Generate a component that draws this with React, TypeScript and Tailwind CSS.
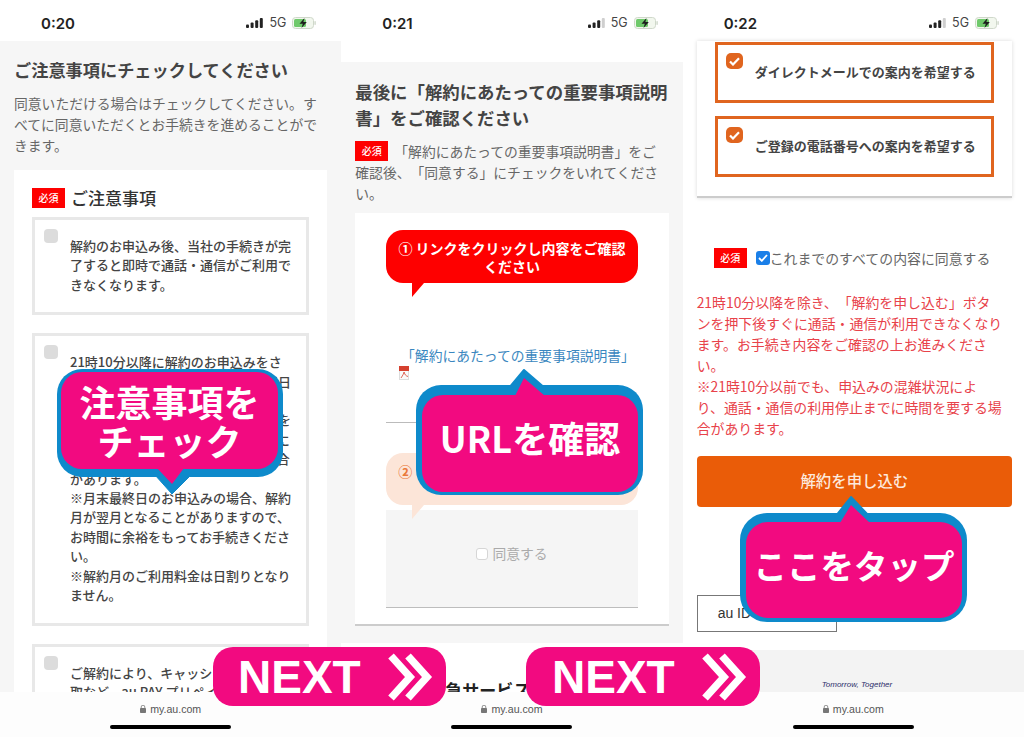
import { ReactNode } from "react";

function StatusBar({ time, full }: { time: string; full?: boolean }) {
  return (
    <div className="flex h-[41px] shrink-0 items-center bg-white pl-[41px] pr-[25px] pt-[5px]">
      <span className="text-[15px] font-semibold leading-none text-[#222] font-['Inter',sans-serif]">{time}</span>
      <div className="ml-auto flex items-center">
        <svg width="18" height="10" viewBox="0 0 18 10" fill="#222">
          <rect x="0" y="6.5" width="3" height="3.5" rx="1" />
          <rect x="4.6" y="4.5" width="3" height="5.5" rx="1" />
          <rect x="9.2" y="2.2" width="3" height="7.8" rx="1" />
          <rect x="13.8" y="0" width="3" height="10" rx="1" fill={full ? "#222" : "#cfcfcf"} />
        </svg>
        <span className="ml-[5px] text-[12.5px] leading-none text-[#444] font-['Inter',sans-serif]">5G</span>
        <svg className="ml-[6px]" width="24" height="12" viewBox="0 0 24 12">
          <rect x="0.5" y="0.5" width="21" height="11" rx="3" fill="#f2f7ee" stroke="#cfd8ca" />
          <rect x="2" y="2" width="12" height="8" rx="1.5" fill="#6fc96b" />
          <path d="M12.5 1 L7.5 6.8 H10.8 L9.5 11 L14.8 5 H11.4 Z" fill="#1d1d1d" />
          <rect x="22.4" y="4" width="1.4" height="4" rx="0.7" fill="#cfd8ca" />
        </svg>
      </div>
    </div>
  );
}

function BrowserBar() {
  return (
    <div className="absolute inset-x-0 bottom-0 flex h-[45px] flex-col items-center bg-[#fdfdfd]">
      <div className="mt-[11px] flex h-[12px] items-center gap-[4px]">
        <svg width="6" height="8" viewBox="0 0 6 8" fill="#777">
          <rect x="0" y="3" width="6" height="5" rx="0.8" />
          <path d="M1.2 3.2V2a1.8 1.8 0 0 1 3.6 0v1.2" fill="none" stroke="#777" strokeWidth="0.8" />
        </svg>
        <span className="text-[10.6px] leading-none text-[#555] font-['Liberation_Sans',sans-serif]">my.au.com</span>
      </div>
      <div className="mt-[10px] h-[4px] w-[121px] rounded-full bg-black" />
    </div>
  );
}

function Badge() {
  return (
    <span className="inline-flex h-[20px] w-[33px] shrink-0 items-center justify-center bg-[#fe0000] align-top text-[10px] font-medium leading-none text-white">
      必須
    </span>
  );
}

function NoticeBox({ lines, children }: { lines: string[]; children?: ReactNode }) {
  return (
    <div className="flex border-[3px] border-[#e8e8e8] bg-white pb-[18px] pl-[9px]">
      <span className="mt-[9px] h-[14px] w-[14px] shrink-0 rounded-[4px] bg-[#dcdcdc]" />
      <p className="ml-[12px] mt-[16px] whitespace-nowrap text-[13px] font-medium leading-[19.4px] text-[#444]">
        {lines.map((l) => (
          <span key={l} className="block">{l}</span>
        ))}
        {children}
      </p>
    </div>
  );
}

function OrangeBox({ label }: { label: string }) {
  return (
    <div className="flex h-[61px] border-[3px] border-[#e0651f] bg-white pl-[8px]">
      <span className="mt-[8px] flex h-[16px] w-[17px] shrink-0 items-center justify-center rounded-[5px] bg-[#e0651f]">
        <svg width="11" height="9" viewBox="0 0 11 9" fill="none" stroke="white" strokeWidth="2.2">
          <path d="M1 4.5 L4 7.5 L10 1.2" />
        </svg>
      </span>
      <span className="ml-[12px] mt-[17px] whitespace-nowrap text-[13px] font-bold leading-[20px] text-[#444]">{label}</span>
    </div>
  );
}

function Next({ className }: { className: string }) {
  return (
    <div className={`absolute top-[647px] flex h-[59px] items-center rounded-[20px] bg-[#f20a80] ${className}`}>
      <span className="text-[46px] font-bold leading-none text-white font-['Liberation_Sans',sans-serif]">NEXT</span>
      <svg className="ml-[27px]" width="46" height="48" viewBox="0 0 46 48" fill="none" stroke="white" strokeWidth="7.5" strokeMiterlimit="10">
        <path d="M3 3 L22 24 L3 45" />
        <path d="M20 3 L39 24 L20 45" />
      </svg>
    </div>
  );
}

export default function App() {
  return (
    <div className="relative grid h-[737px] w-[1024px] grid-cols-3 overflow-hidden bg-white [text-spacing-trim:space-all] font-['Noto_Sans_CJK_JP','Liberation_Sans',sans-serif]">
      {/* 0:20 */}
      <div className="relative flex h-[737px] flex-col overflow-hidden">
        <StatusBar time="0:20" full />
        <div className="flex-1 bg-[#f6f6f6] px-[14px] pt-[16px]">
          <h2 className="text-[17.2px] font-bold leading-[26px] text-[#444]">ご注意事項にチェックしてください</h2>
          <p className="mt-[10px] text-[13.8px] leading-[21px] text-[#666]">
            同意いただける場合はチェックしてください。すべてに同意いただくとお手続きを進めることができます。
          </p>
          <div className="mt-[14px] bg-white px-[18px] pt-[18px]">
            <div className="flex items-center gap-[6px]">
              <Badge />
              <span className="text-[17px] font-medium leading-[20px] text-[#333]">ご注意事項</span>
            </div>
            <div className="mt-[9px] flex flex-col gap-[18px]">
              <NoticeBox lines={["解約のお申込み後、当社の手続きが完", "了すると即時で通話・通信がご利用で", "きなくなります。"]} />
              <NoticeBox
                lines={[
                  "21時10分以降に解約のお申込みをさ",
                  "れた場合、解約のお手続き完了は翌日",
                  "以降となります。",
                  "通話・通信の利用停止までには時間を",
                  "要する場合があります。ご利用状況に",
                  "よっては、さらにお時間を要する場合",
                  "があります。",
                  "※月末最終日のお申込みの場合、解約",
                  "月が翌月となることがありますので、",
                  "お時間に余裕をもってお手続きくださ",
                  "い。",
                  "※解約月のご利用料金は日割りとなり",
                  "ません。",
                ]}
              />
              <NoticeBox lines={["ご解約により、キャッシュバック受", "取など、au PAY プリペイドカード"]} />
            </div>
          </div>
        </div>
        <BrowserBar />
      </div>

      {/* 0:21 */}
      <div className="relative flex h-[737px] flex-col overflow-hidden">
        <StatusBar time="0:21" />
        <div className="mt-[21px] bg-[#f6f6f6] px-[14px] pb-[17px] pt-[17px]">
          <h2 className="text-[17.4px] font-bold leading-[26px] text-[#444]">
            最後に「解約にあたっての重要事項説明書」をご確認ください
          </h2>
          <p className="mt-[10px] text-[13.8px] leading-[21px] text-[#666]">
            <span className="mr-[6px]"><Badge /></span>
            「解約にあたっての重要事項説明書」をご確認後、「同意する」にチェックをいれてください。
          </p>
          <div className="mt-[9px] border-b-2 border-[#cccccc] bg-white px-[31px] pb-[16px] pt-[17px]">
            <div className="relative flex h-[53px] items-center justify-center rounded-[17px] bg-[#fe0000] px-[8px] text-center text-[14px] font-bold leading-[18px] text-white">
              ① リンクをクリックし内容をご確認ください
              <span className="absolute left-[26px] top-full h-0 w-0 border-r-[12px] border-t-[14px] border-r-transparent border-t-[#fe0000]" />
            </div>
            <p className="mt-[62px] whitespace-nowrap pl-[12px] text-center text-[13.8px] leading-[20px] text-[#3a87c0]">
              「解約にあたっての重要事項説明書」
            </p>
            <svg className="ml-[13px] mt-[1px]" width="10" height="14" viewBox="0 0 10 14">
              <rect x="0.5" y="0.5" width="9" height="13" fill="#fafafa" stroke="#ddd" />
              <rect x="0" y="0" width="10" height="5" fill="#d5402f" />
              <path d="M2 12 C4 9 5 7 5 6 C6 9 7 10 9 10.5" fill="none" stroke="#d5402f" strokeWidth="0.8" />
            </svg>
            <div className="mt-[42px] h-px bg-[#bbbbbb]" />
            <div className="relative mt-[30px] flex h-[52px] items-start rounded-[17px] bg-[#fce5d8] pl-[12px] pt-[8px] text-[14px] font-bold leading-[20px] text-[#ea7a3c]">
              ②
              <span className="absolute left-[26px] top-full z-10 h-0 w-0 border-r-[12px] border-t-[14px] border-r-transparent border-t-[#fce5d8]" />
            </div>
            <div className="mt-[5px] flex h-[98px] items-center justify-center gap-[4px] border-b border-[#bdbdbd] bg-[#f5f5f5] pb-[10px]">
              <span className="h-[12px] w-[12px] rounded-[3px] border border-[#d6d6d6] bg-white" />
              <span className="text-[13.8px] leading-none text-[#aaaaaa]">同意する</span>
            </div>
          </div>
        </div>
        <h3 className="ml-[87px] mt-[35px] whitespace-nowrap text-[17px] font-bold leading-[24px] text-[#222]">緊急サービスに関する</h3>
        <BrowserBar />
      </div>

      {/* 0:22 */}
      <div className="relative flex h-[737px] flex-col overflow-hidden">
        <StatusBar time="0:22" />
        <div className="ml-[14px] mr-[12px] flex flex-col gap-[13px] border-b-2 border-[#cccccc] bg-white px-[18px] pb-[19px] pt-px shadow-[0_0_4px_rgba(0,0,0,0.15)]">
          <OrangeBox label="ダイレクトメールでの案内を希望する" />
          <OrangeBox label="ご登録の電話番号への案内を希望する" />
        </div>
        <div className="ml-[31px] mt-[50px] flex items-center">
          <Badge />
          <span className="ml-[9px] flex h-[14px] w-[14px] items-center justify-center rounded-[3px] bg-[#1a7fe8]">
            <svg width="10" height="8" viewBox="0 0 10 8" fill="none" stroke="white" strokeWidth="1.8">
              <path d="M1 4 L3.8 6.8 L9 1" />
            </svg>
          </span>
          <span className="whitespace-nowrap text-[13.9px] leading-[20px] text-[#666]">これまでのすべての内容に同意する</span>
        </div>
        <p className="ml-[14px] mt-[24px] w-[307px] text-[13.9px] leading-[21px] text-[#e8424a]">
          21時10分以降を除き、「解約を申し込む」ボタンを押下後すぐに通話・通信が利用できなくなります。お手続き内容をご確認の上お進みください。
          <br />
          ※21時10分以前でも、申込みの混雑状況により、通話・通信の利用停止までに時間を要する場合があります。
        </p>
        <button className="ml-[14px] mr-[12px] mt-[17px] flex h-[51px] shrink-0 items-center justify-center rounded-[4px] bg-[#ea5c08] pb-[2px] text-[15.4px] font-medium text-[#fde9dc]">
          解約を申し込む
        </button>
        <div className="ml-[14px] mt-[88px] flex h-[37px] w-[140px] shrink-0 items-center border border-[#777] pl-[20px] text-[14px] font-medium text-[#333] font-['Liberation_Sans',sans-serif]">
          au ID
        </div>
        <div className="mt-[18px] flex-1 bg-[#f3f3f3] pl-[139px] pt-[29px]">
          <span className="block text-[8px] italic leading-[12px] text-[#2b2f6b] font-['Liberation_Sans',sans-serif]">Tomorrow, Together</span>
        </div>
        <BrowserBar />
      </div>

      {/* callouts over the screenshots */}
      <div className="absolute left-[57px] top-[369px] h-[126px] w-[226px]">
        <svg className="absolute inset-0" width="226" height="126" viewBox="0 0 226 126">
          <rect x="0" y="0" width="226" height="108" rx="25" fill="#0e8acb" />
          <path d="M98 106 L115 125 L134 106 Z" fill="#0e8acb" stroke="#0e8acb" strokeLinejoin="round" />
          <rect x="4" y="3" width="217" height="97" rx="21" fill="#f20a80" />
          <path d="M100 99 L115 115 L127 99 Z" fill="#f20a80" />
        </svg>
        <div className="absolute left-[4px] top-[3px] flex h-[97px] w-[217px] flex-col items-center justify-center text-[36px] font-bold leading-[39px] text-white">
          <span>注意事項を</span>
          <span>チェック</span>
        </div>
      </div>
      <div className="absolute left-[416px] top-[369px] h-[126px] w-[227px]">
        <svg className="absolute inset-0" width="227" height="126" viewBox="0 0 227 126">
          <rect x="0" y="16" width="227" height="110" rx="25" fill="#0e8acb" />
          <path d="M92 20 L108 1 L130 20 Z" fill="#0e8acb" stroke="#0e8acb" strokeWidth="2" strokeLinejoin="round" />
          <rect x="6" y="26" width="216" height="97" rx="21" fill="#f20a80" />
          <path d="M99 27 L108 9 L129 27 Z" fill="#f20a80" />
        </svg>
        <div className="absolute left-[6px] top-[19px] flex h-[97px] w-[216px] items-center justify-center whitespace-nowrap text-[36px] font-bold leading-none text-white">
          URLを確認
        </div>
      </div>
      <div className="absolute left-[740px] top-[496px] h-[126px] w-[227px]">
        <svg className="absolute inset-0" width="227" height="126" viewBox="0 0 227 126">
          <rect x="0" y="17" width="227" height="109" rx="27" fill="#0e8acb" />
          <path d="M95 21 L111 1 L130 21 Z" fill="#0e8acb" stroke="#0e8acb" strokeWidth="2" strokeLinejoin="round" />
          <rect x="6" y="26" width="216" height="96" rx="22" fill="#f20a80" />
          <path d="M100 27 L111 9 L130 27 Z" fill="#f20a80" />
        </svg>
        <div className="absolute left-[6px] top-[21px] flex h-[96px] w-[216px] items-center justify-center whitespace-nowrap text-[33.5px] font-bold leading-none text-white">
          ここをタップ
        </div>
      </div>

      <Next className="left-[213px] w-[233px] pl-[25px]" />
      <Next className="left-[526px] w-[234px] pl-[26px]" />
    </div>
  );
}
